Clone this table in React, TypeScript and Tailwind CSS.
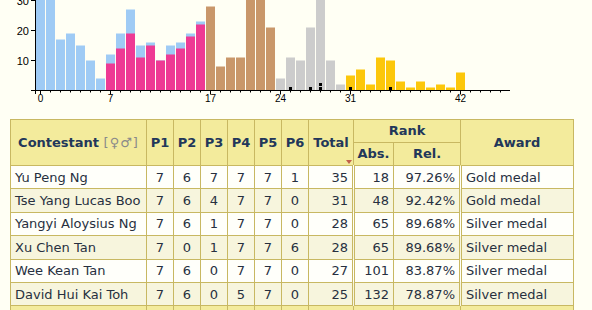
import React from "react";

const totals = [40, 40, 17, 19, 15, 10, 4, 12, 19, 27, 15, 16, 10, 15, 16, 19, 23, 28, 8, 11, 11, 40, 40, 21, 4, 11, 10, 21, 40, 10, 2, 5, 7, 2, 11, 10, 3, 1, 3, 1, 2, 1, 6];
const pinks: Record<number, number> = { 7: 9, 8: 14, 9: 19, 10: 11, 11: 15, 12: 10, 13: 12, 14: 14, 15: 18, 16: 22 };
const dots: Record<number, number> = { 25: 1, 27: 1, 28: 2, 31: 1, 35: 1 };
const labels = [0, 7, 17, 24, 31, 42];

function colorFor(i: number) {
  if (i <= 16) return "#9fcbf5";
  if (i <= 23) return "#c9976a";
  if (i <= 30) return "#cccccc";
  return "#fcc70a";
}

const BASE = 90.5;
const U = 3;

function Chart() {
  return (
    <svg width={592} height={119} className="block" style={{ fontFamily: "'Liberation Sans', Arial, sans-serif" }}>
      {totals.map((v, i) => {
        const x = 36 + i * 10;
        const h = v * U;
        const p = pinks[i];
        return (
          <g key={i}>
            <rect x={x} y={BASE - h} width={9} height={h} fill={colorFor(i)} />
            {p !== undefined && <rect x={x} y={BASE - p * U} width={9} height={p * U} fill="#ee3a94" />}
          </g>
        );
      })}
      {Object.entries(dots).map(([k, n]) => {
        const cx = 36 + Number(k) * 10 + 4.5;
        return Array.from({ length: n }).map((_, j) => (
          <rect key={k + "-" + j} x={cx - 1.5} y={87 - j * 4} width={3} height={3} fill="#000" />
        ));
      })}
      <line x1={35.5} y1={0} x2={35.5} y2={94} stroke="#000" strokeWidth={1} />
      <line x1={31} y1={BASE} x2={510} y2={BASE} stroke="#000" strokeWidth={1} />
      {[10, 20, 30].map((t) => (
        <g key={t}>
          <line x1={31} y1={BASE - t * U} x2={35} y2={BASE - t * U} stroke="#000" />
          <text x={29} y={BASE - t * U + 4} fontSize={11} textAnchor="end" fill="#000">
            {t}
          </text>
        </g>
      ))}
      {totals.map((_, i) => (
        <line key={"t" + i} x1={40.5 + i * 10} y1={BASE} x2={40.5 + i * 10} y2={BASE + (labels.includes(i) ? 4 : 2)} stroke="#000" />
      ))}
      {[43, 44, 45, 46].map((i) => (
        <line key={"x" + i} x1={40.5 + i * 10} y1={BASE} x2={40.5 + i * 10} y2={BASE + 2} stroke="#000" />
      ))}
      {labels.map((l) => (
        <text key={"l" + l} x={40.5 + l * 10} y={102} fontSize={10} textAnchor="middle" fill="#000">
          {l}
        </text>
      ))}
    </svg>
  );
}

const rows = [
  { name: "Yu Peng Ng", p: [7, 6, 7, 7, 7, 1], total: 35, abs: 18, rel: "97.26%", award: "Gold medal" },
  { name: "Tse Yang Lucas Boo", p: [7, 6, 4, 7, 7, 0], total: 31, abs: 48, rel: "92.42%", award: "Gold medal" },
  { name: "Yangyi Aloysius Ng", p: [7, 6, 1, 7, 7, 0], total: 28, abs: 65, rel: "89.68%", award: "Silver medal" },
  { name: "Xu Chen Tan", p: [7, 0, 1, 7, 7, 6], total: 28, abs: 65, rel: "89.68%", award: "Silver medal" },
  { name: "Wee Kean Tan", p: [7, 6, 0, 7, 7, 0], total: 27, abs: 101, rel: "83.87%", award: "Silver medal" },
  { name: "David Hui Kai Toh", p: [7, 6, 0, 5, 7, 0], total: 25, abs: 132, rel: "78.87%", award: "Silver medal" },
];

const th = "border border-[#c8b862] bg-[#f3eb9c] text-[#22375a] font-bold p-0";
const td = "border border-[#c8b862] h-[23.4px] p-0 leading-none";

export default function App() {
  return (
    <div className="w-[592px] h-[310px] overflow-hidden bg-[#fffff4]" style={{ fontFamily: "'DejaVu Sans', Verdana, sans-serif" }}>
      <Chart />
      <table className="ml-[10px] table-fixed border-collapse w-[563px] text-[13px]">
        <colgroup>
          <col className="w-[136px]" />
          <col className="w-[27px]" />
          <col className="w-[27px]" />
          <col className="w-[27px]" />
          <col className="w-[27px]" />
          <col className="w-[27px]" />
          <col className="w-[27px]" />
          <col className="w-[45px]" />
          <col className="w-[40px]" />
          <col className="w-[67px]" />
          <col className="w-[113px]" />
        </colgroup>
        <thead>
          <tr className="h-[23px]">
            <th rowSpan={2} className={th}>
              Contestant <span className="font-normal text-[#8a8a8a] tracking-[1px]">[♀♂]</span>
            </th>
            {["P1", "P2", "P3", "P4", "P5", "P6"].map((p) => (
              <th key={p} rowSpan={2} className={th}>
                {p}
              </th>
            ))}
            <th rowSpan={2} className={th + " relative"}>
              Total
              <span className="absolute right-[1px] bottom-[1px] w-0 h-0 border-l-[3px] border-r-[3px] border-t-[4px] border-l-transparent border-r-transparent border-t-[#c0604a]" />
            </th>
            <th colSpan={2} className={th}>
              Rank
            </th>
            <th rowSpan={2} className={th}>
              Award
            </th>
          </tr>
          <tr className="h-[23px]">
            <th className={th}>Abs.</th>
            <th className={th}>Rel.</th>
          </tr>
        </thead>
        <tbody className="text-[#27303f]">
          {rows.map((r, i) => (
            <tr key={r.name} className={i % 2 === 0 ? "bg-[#fffffa]" : "bg-[#f7f5dd]"}>
              <td className={td + " text-left pl-[4px] whitespace-nowrap"}>{r.name}</td>
              {r.p.map((v, j) => (
                <td key={j} className={td + " text-center"}>
                  {v}
                </td>
              ))}
              <td className={td + " text-right pr-[4px]"}>{r.total}</td>
              <td className={td + " text-right pr-[4px] border-l-[3px]"} style={{ borderLeftStyle: "double" }}>
                {r.abs}
              </td>
              <td className={td + " text-right pr-[4px] border-r-[3px]"} style={{ borderRightStyle: "double" }}>
                {r.rel}
              </td>
              <td className={td + " text-left pl-[4px] whitespace-nowrap"}>{r.award}</td>
            </tr>
          ))}
          <tr className="bg-[#f3eb9c]">
            {Array.from({ length: 11 }).map((_, j) => (
              <td key={j} className={td}>
                &nbsp;
              </td>
            ))}
          </tr>
        </tbody>
      </table>
    </div>
  );
}
